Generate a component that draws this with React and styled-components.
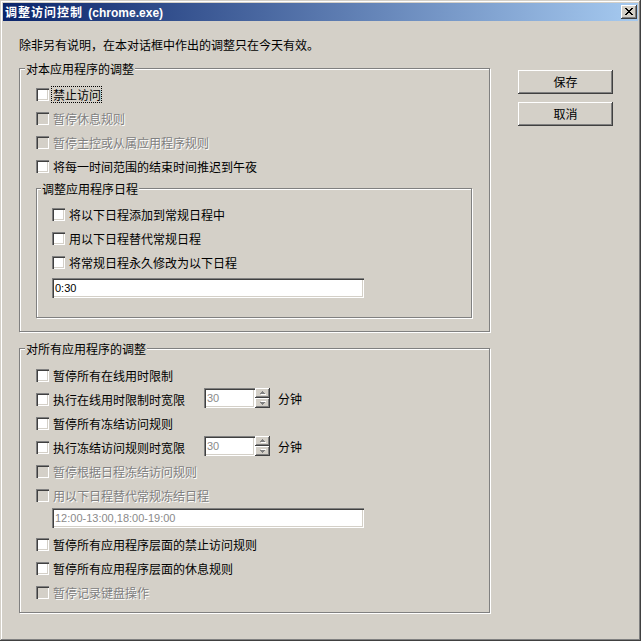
import styled, { createGlobalStyle } from "styled-components";

const GlobalStyle = createGlobalStyle`
  html, body {
    margin: 0;
    padding: 0;
    background: #d4d0c8;
  }
  body {
    font-family: "Noto Sans CJK SC", "Liberation Sans", sans-serif;
    font-size: 12px;
    color: #000;
  }
`;

const raised = `
  box-shadow: inset -1px -1px #404040, inset 1px 1px #ffffff,
    inset -2px -2px #808080, inset 2px 2px #d4d0c8;
`;

const sunken = `
  box-shadow: inset 1px 1px #808080, inset 2px 2px #404040,
    inset -1px -1px #ffffff, inset -2px -2px #d4d0c8;
`;

const Window = styled.div`
  width: 641px;
  height: 641px;
  box-sizing: border-box;
  padding: 3px;
  background: #d4d0c8;
  box-shadow: inset -1px -1px #404040, inset 1px 1px #d4d0c8,
    inset -2px -2px #808080, inset 2px 2px #ffffff;
  display: flex;
  flex-direction: column;
`;

const TitleBar = styled.div`
  height: 18px;
  flex: none;
  display: flex;
  align-items: center;
  padding: 0 1px 0 2px;
  background: linear-gradient(to right, #0a246a, #a6caf0);
`;

const Title = styled.div`
  color: #fff;
  font-weight: bold;
  font-size: 12px;
  line-height: 18px;
  white-space: nowrap;
`;

const TitleCjk = styled.span`
  letter-spacing: 1px;
`;

const TitleLatin = styled.span`
  font-family: "Liberation Sans", sans-serif;
  font-size: 12px;
  margin-left: 2px;
`;

const CloseButton = styled.div`
  margin-left: auto;
  width: 16px;
  height: 14px;
  background: #d4d0c8;
  ${raised}
  display: flex;
  align-items: center;
  justify-content: center;
  svg {
    display: block;
    margin: 0 1px 1px 0;
  }
`;

const Body = styled.div`
  flex: 1;
  padding: 18px 25px 0 16px;
  display: flex;
  flex-direction: column;
`;

const Intro = styled.div`
  line-height: 12px;
  white-space: nowrap;
`;

const MainRow = styled.div`
  display: flex;
  gap: 28px;
  margin-top: 17px;
`;

const LeftCol = styled.div`
  width: 471px;
  display: flex;
  flex-direction: column;
`;

const Group = styled.div`
  display: flex;
  flex-direction: column;
  align-items: flex-start;
  border: 1px solid #808080;
  box-shadow: inset 1px 1px #ffffff, 1px 1px #ffffff;
  margin-top: ${(p) => p.$mt || 0}px;
  padding: 0 ${(p) => p.$pr || 0}px ${(p) => p.$pb || 0}px ${(p) => p.$pl || 16}px;
  align-self: ${(p) => (p.$stretch ? "stretch" : "auto")};
`;

const Legend = styled.div`
  margin: -6px 0 ${(p) => p.$gap || 7}px -11px;
  padding: 0 1px;
  line-height: 12px;
  background: #d4d0c8;
  white-space: nowrap;
`;

const Row = styled.div`
  height: 24px;
  display: flex;
  align-items: center;
`;

const Check = styled.div`
  width: 13px;
  height: 13px;
  flex: none;
  background: ${(p) => (p.$disabled ? "#d4d0c8" : "#ffffff")};
  ${sunken}
`;

const Label = styled.div`
  margin-left: 2px;
  padding: 1px 0 1px 1px;
  line-height: 13px;
  white-space: nowrap;
  box-sizing: border-box;
  width: ${(p) => (p.$w ? `${p.$w}px` : "auto")};
  flex: none;
  border: 1px dotted ${(p) => (p.$focus ? "#000" : "transparent")};
  color: ${(p) => (p.$disabled ? "#808080" : "#000")};
  text-shadow: ${(p) => (p.$disabled ? "1px 1px 0 #ffffff" : "none")};
`;

const Field = styled.div`
  width: ${(p) => p.$w}px;
  height: 20px;
  box-sizing: border-box;
  background: #ffffff;
  ${sunken}
  padding: 0 3px;
  margin: ${(p) => p.$m || "0"};
  font-family: "Liberation Sans", sans-serif;
  font-size: 11px;
  line-height: 20px;
  color: ${(p) => (p.$dim ? "#8a8a8a" : "#000")};
  white-space: nowrap;
  overflow: hidden;
`;

const Spin = styled.div`
  display: flex;
  align-items: center;
  margin-top: -2px;
`;

const SpinButtons = styled.div`
  display: flex;
  flex-direction: column;
`;

const SpinButton = styled.div`
  width: 15px;
  height: 10px;
  background: #d4d0c8;
  ${raised}
  display: flex;
  align-items: center;
  justify-content: center;
  svg {
    display: block;
  }
`;

const Unit = styled.div`
  margin-left: 8px;
  line-height: 13px;
`;

const ButtonCol = styled.div`
  display: flex;
  flex-direction: column;
  gap: 8px;
  margin-top: 2px;
`;

const Button = styled.button`
  width: 95px;
  height: 24px;
  border: none;
  padding: 0;
  background: #d4d0c8;
  ${raised}
  font-family: "Noto Sans CJK SC", sans-serif;
  font-size: 12px;
  line-height: 24px;
  color: #000;
`;

const CloseGlyph = () => (
  <svg width="8" height="7" viewBox="0 0 8 7" shapeRendering="crispEdges">
    <path
      fill="#000"
      d="M0 0h2v1H0zM6 0h2v1H6zM1 1h2v1H1zM5 1h2v1H5zM2 2h4v1H2zM3 3h2v1H3zM2 4h4v1H2zM1 5h2v1H1zM5 5h2v1H5zM0 6h2v1H0zM6 6h2v1H6z"
    />
  </svg>
);

const Arrow = ({ down }) => (
  <svg
    width="6"
    height="4"
    viewBox="0 0 6 4"
    shapeRendering="crispEdges"
    style={{ transform: down ? "scaleY(-1)" : "none" }}
  >
    <path fill="#ffffff" d="M3 1h1v1H3zM2 2h3v1H2zM1 3h5v1H1z" />
    <path fill="#808080" d="M2 0h1v1H2zM1 1h3v1H1zM0 2h5v1H0z" />
  </svg>
);

const CheckRow = ({ label, disabled, focus, width, children }) => (
  <Row>
    <Check $disabled={disabled} />
    <Label $disabled={disabled} $focus={focus} $w={width}>
      {label}
    </Label>
    {children}
  </Row>
);

const SpinField = ({ value }) => (
  <Spin>
    <Field $w={51} $dim>
      {value}
    </Field>
    <SpinButtons>
      <SpinButton>
        <Arrow />
      </SpinButton>
      <SpinButton>
        <Arrow down />
      </SpinButton>
    </SpinButtons>
    <Unit>分钟</Unit>
  </Spin>
);

const App = () => {
  return (
    <Window>
      <GlobalStyle />
      <TitleBar>
        <Title>
          <TitleCjk>调整访问控制</TitleCjk>
          <TitleLatin> (chrome.exe)</TitleLatin>
        </Title>
        <CloseButton>
          <CloseGlyph />
        </CloseButton>
      </TitleBar>
      <Body>
        <Intro>除非另有说明，在本对话框中作出的调整只在今天有效。</Intro>
        <MainRow>
          <LeftCol>
            <Group $pr={17} $pb={13}>
              <Legend>对本应用程序的调整</Legend>
              <CheckRow label="禁止访问" focus />
              <CheckRow label="暂停休息规则" disabled />
              <CheckRow label="暂停主控或从属应用程序规则" disabled />
              <CheckRow label="将每一时间范围的结束时间推迟到午夜" />
              <Group $mt={10} $pl={15} $pb={19} $stretch>
                <Legend>调整应用程序日程</Legend>
                <CheckRow label="将以下日程添加到常规日程中" />
                <CheckRow label="用以下日程替代常规日程" />
                <CheckRow label="将常规日程永久修改为以下日程" />
                <Field $w={312} $m="4px 0 0 0">
                  0:30
                </Field>
              </Group>
            </Group>
            <Group $mt={16} $pr={17} $pb={8}>
              <Legend $gap={8}>对所有应用程序的调整</Legend>
              <CheckRow label="暂停所有在线用时限制" />
              <CheckRow label="执行在线用时限制时宽限" width={153}>
                <SpinField value="30" />
              </CheckRow>
              <CheckRow label="暂停所有冻结访问规则" />
              <CheckRow label="执行冻结访问规则时宽限" width={153}>
                <SpinField value="30" />
              </CheckRow>
              <CheckRow label="暂停根据日程冻结访问规则" disabled />
              <CheckRow label="用以下日程替代常规冻结日程" disabled />
              <Field $w={312} $m="1px 0 4px 16px" $dim>
                12:00-13:00,18:00-19:00
              </Field>
              <CheckRow label="暂停所有应用程序层面的禁止访问规则" />
              <CheckRow label="暂停所有应用程序层面的休息规则" />
              <CheckRow label="暂停记录键盘操作" disabled />
            </Group>
          </LeftCol>
          <ButtonCol>
            <Button>保存</Button>
            <Button>取消</Button>
          </ButtonCol>
        </MainRow>
      </Body>
    </Window>
  );
};

export default App;
